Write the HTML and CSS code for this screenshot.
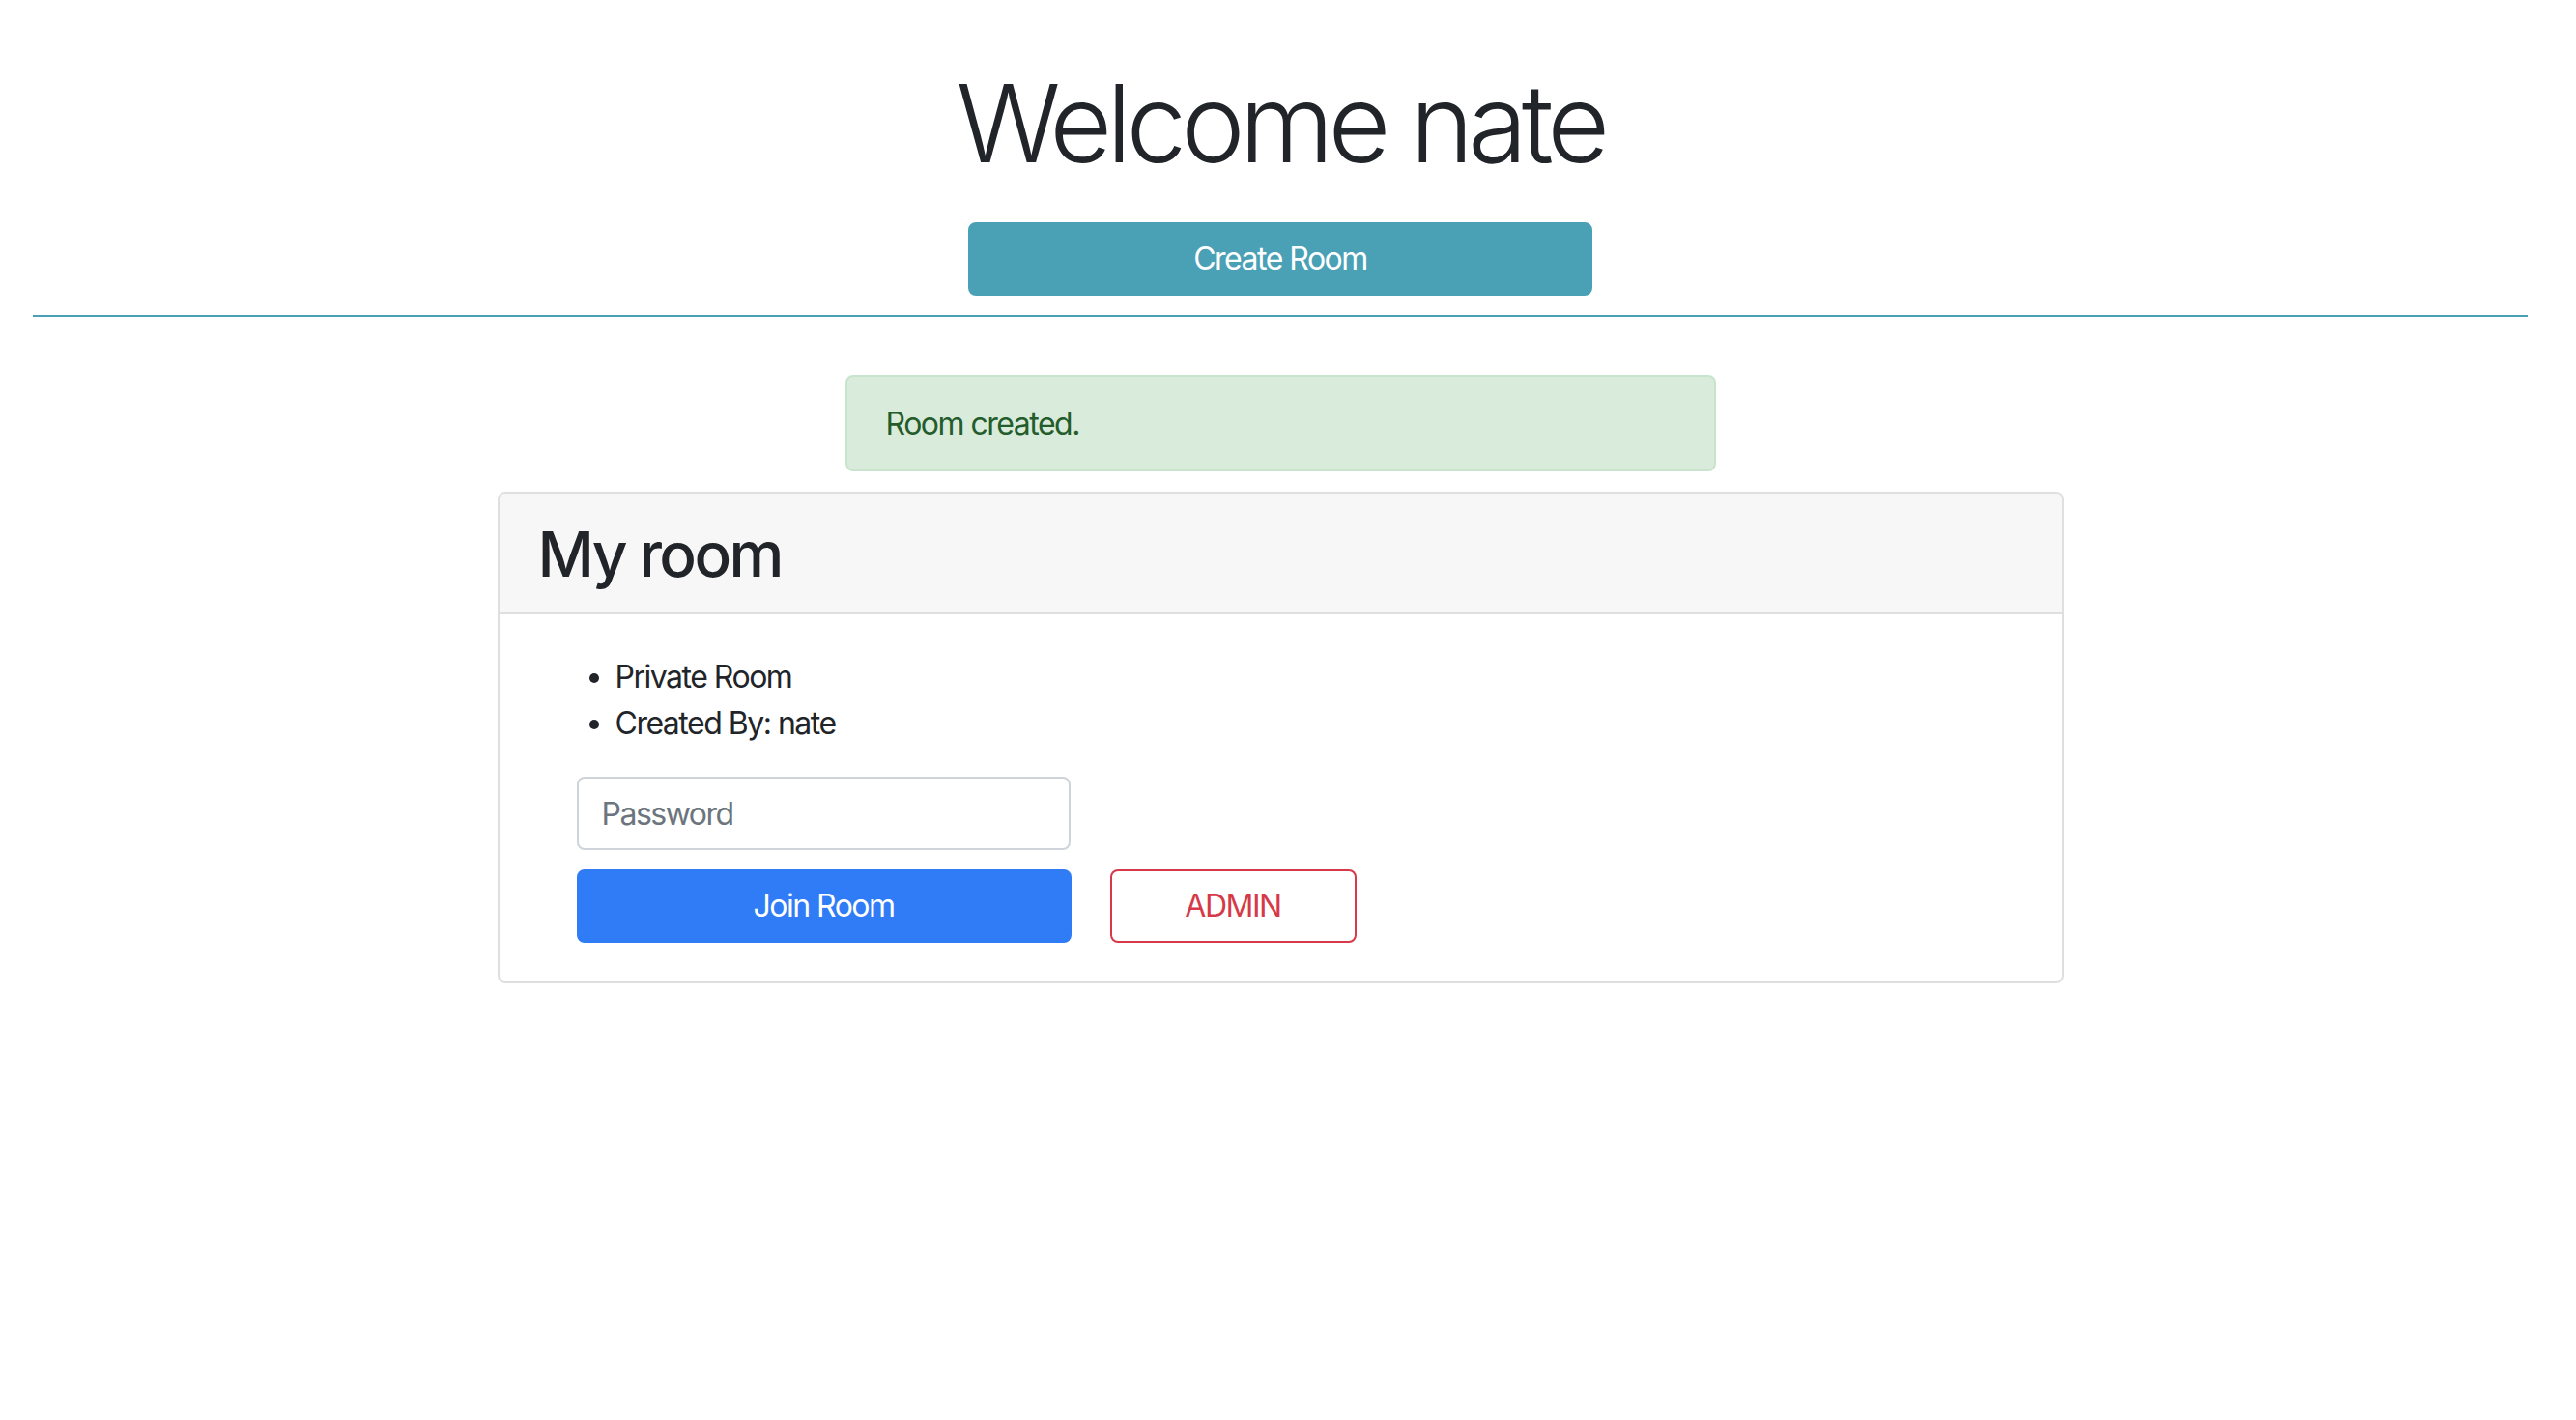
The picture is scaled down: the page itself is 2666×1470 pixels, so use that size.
FILE: index.html
```html
<!DOCTYPE html>
<html lang="en">
<head>
<meta charset="utf-8">
<title>Welcome nate</title>
<link rel="stylesheet" href="styles.css">
</head>
<body>
<div class="page">
  <header class="hero">
    <h1 class="title">Welcome nate</h1>
    <button class="btn btn-info create-btn" type="button">Create Room</button>
  </header>
  <hr class="divider">
  <div class="alert">Room created.</div>
  <section class="card">
    <div class="card-header">
      <h2 class="card-title">My room</h2>
    </div>
    <div class="card-body">
      <ul class="meta">
        <li>Private Room</li>
        <li>Created By: nate</li>
      </ul>
      <form class="join">
        <input class="form-control" type="password" placeholder="Password">
        <div class="actions">
          <button class="btn btn-primary join-btn" type="button">Join Room</button>
          <button class="btn btn-outline-danger admin-btn" type="button">ADMIN</button>
        </div>
      </form>
    </div>
  </section>
</div>
</body>
</html>
```

FILE: styles.css
```css
* { box-sizing: border-box; }

html, body {
  margin: 0;
  padding: 0;
  background: #ffffff;
}

body {
  font-family: Inter, "Noto Sans", "Liberation Sans", sans-serif;
  font-size: 32px;
  line-height: 48px;
  letter-spacing: -1.5px;
  color: #212529;
}

.page {
  padding: 0 50px 0 34px;
}

.hero {
  display: flex;
  flex-direction: column;
  align-items: center;
}

.title {
  margin: 60px 0 0;
  font-size: 112px;
  font-weight: 300;
  line-height: 134px;
  letter-spacing: -5.9px;
  color: #212529;
}

.btn {
  font-family: inherit;
  font-size: 32px;
  line-height: 48px;
  letter-spacing: -1.5px;
  font-weight: 400;
  padding: 12px 24px;
  border: 2px solid transparent;
  border-radius: 8px;
  text-align: center;
  cursor: pointer;
}

.btn-info {
  background: #4aa1b5;
  border-color: #4aa1b5;
  color: #ffffff;
}

.create-btn {
  margin-top: 36px;
  width: 646px;
}

.divider {
  margin: 20px 0 0;
  height: 2px;
  border: 0;
  background: #4aa1b5;
}

.alert {
  width: 901px;
  margin: 60px auto 0;
  padding: 25px 40px 23px;
  border: 2px solid #c9e4cd;
  border-radius: 8px;
  background: #d9ebdb;
  color: #245c2b;
}

.card {
  width: 1621px;
  margin: 21px auto 0;
  border: 2px solid #dfdfdf;
  border-radius: 8px;
  overflow: hidden;
}

.card-header {
  padding: 24px 40px 22px;
  background: #f7f7f7;
  border-bottom: 2px solid #dfdfdf;
}

.card-title {
  margin: 0;
  font-size: 64px;
  font-weight: 500;
  line-height: 77px;
  letter-spacing: -2.6px;
  color: #212529;
}

.card-body {
  padding: 40px;
}

.meta {
  margin: 0 0 31px;
  padding: 1px 0 0 80px;
}

.join {
  margin-left: 40px;
  display: flex;
  flex-direction: column;
  gap: 20px;
}

.form-control {
  width: 511px;
  height: 76px;
  padding: 12px 24px;
  font-family: inherit;
  font-size: 32px;
  line-height: 48px;
  letter-spacing: -1.5px;
  color: #495057;
  background: #ffffff;
  border: 2px solid #ced4da;
  border-radius: 8px;
}

.form-control::placeholder {
  color: #6c757d;
}

.actions {
  display: flex;
  gap: 40px;
}

.btn-primary {
  background: #2f7cf6;
  border-color: #2f7cf6;
  color: #ffffff;
}

.join-btn {
  width: 512px;
}

.btn-outline-danger {
  background: #ffffff;
  border-color: #d63a48;
  color: #d63a48;
}

.admin-btn {
  width: 255px;
}
```
